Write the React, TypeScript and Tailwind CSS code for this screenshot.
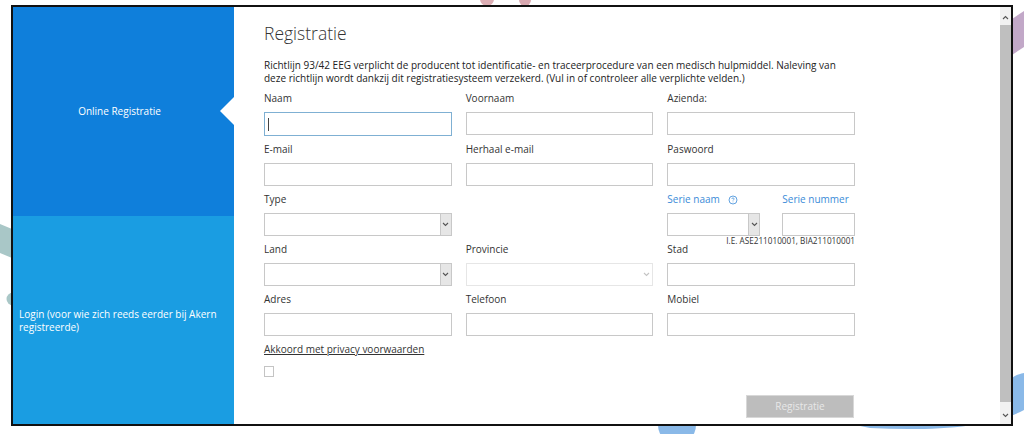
import React from "react";

const labelCls = "h-[13px] text-[10px] leading-[13px] text-[#333333] mb-[7px] whitespace-nowrap";
const inputCls = "block w-full h-[23px] border border-[#c8c8c8] bg-white";

function Chevron({ color = "#555555" }: { color?: string }) {
  return (
    <svg width="7" height="5" viewBox="0 0 7 5" fill="none">
      <path d="M1 1l2.5 2.5L6 1" stroke={color} strokeWidth="1.1" />
    </svg>
  );
}

function Select({ disabled = false, className = "w-full" }: { disabled?: boolean; className?: string }) {
  return (
    <div className={`flex justify-end h-[23px] border ${disabled ? "border-[#e6e6e6]" : "border-[#c8c8c8]"} bg-white ${className}`}>
      <div className={`w-[11px] flex items-center justify-center ${disabled ? "" : "bg-[#e6e6e6] border-l border-[#c8c8c8]"}`}>
        <Chevron color={disabled ? "#c4c4c4" : "#555555"} />
      </div>
    </div>
  );
}

function Field({ label, children }: { label: string; children?: React.ReactNode }) {
  return (
    <div className="min-w-0">
      <div className={labelCls}>{label}</div>
      {children ?? <div className={inputCls} />}
    </div>
  );
}

export default function App() {
  return (
    <div className="relative w-[1024px] h-[434px] overflow-hidden bg-white pt-[5px] pl-[11px]" style={{ fontFamily: '"Open Sans", "Noto Sans", sans-serif' }}>
      <svg className="absolute left-0 top-0" width="1024" height="434" viewBox="0 0 1024 434">
        <circle cx="487" cy="-1" r="7" fill="#dcaeb4" />
        <circle cx="525" cy="0" r="6" fill="#d8a8b0" />
        <path d="M1024 11L1012 19V55L1024 47Z" fill="#c2a8c8" />
        <path d="M0 224L12 229V258L0 253Z" fill="#a9c7c7" />
        <circle cx="13" cy="299" r="6.5" fill="#a9c7c7" />
        <circle cx="677" cy="425" r="19" fill="#8ab9e8" />
        <path d="M1024 373C1014 375 1012 378 1012 380V424H850L870 428C930 431 990 428 1024 410Z" fill="#8ab9e8" />
      </svg>

      <div className="relative flex w-[1002px] h-[421px] border-2 border-[#111111] bg-white">
        <aside className="flex flex-col w-[221px] text-[10px] leading-[13px] text-white">
          <div className="relative flex items-center justify-center h-[209px] bg-[#0f7fdb] pr-[8px]">
            <span>Online Registratie</span>
            <div className="absolute right-0 top-[90px] w-0 h-0 border-y-[14px] border-y-transparent border-r-[14px] border-r-white" />
          </div>
          <div className="flex-1 bg-[#1a9de2] pl-[6px] pr-[10px] pt-[92px]">
            Login (voor wie zich reeds eerder bij Akern registreerde)
          </div>
        </aside>

        <main className="flex-1 min-w-0 pl-[30px] pt-[14px] relative">
          <h1 className="text-[17.5px] leading-[24px] font-light text-[#333333]">Registratie</h1>
          <p className="mt-[14px] w-[590px] text-[10px] leading-[13px] text-[#222222]">
            Richtlijn 93/42 EEG verplicht de producent tot identificatie- en traceerprocedure van een medisch hulpmiddel. Naleving van deze richtlijn wordt dankzij dit registratiesysteem verzekerd. (Vul in of controleer alle verplichte velden.)
          </p>

          <div className="mt-[7px] w-[591px] grid grid-cols-3 gap-x-[14px] gap-y-[7px]">
            <Field label="Naam">
              <div className="flex items-center h-[24px] border border-[#7fb0d3] bg-white pl-[3px]">
                <div className="w-px h-[13px] bg-[#444444]" />
              </div>
            </Field>
            <Field label="Voornaam" />
            <Field label="Azienda:" />
            <Field label="E-mail" />
            <Field label="Herhaal e-mail" />
            <Field label="Paswoord" />
            <Field label="Type">
              <Select />
            </Field>
            <div />
            <div className="relative">
              <div className="flex mb-[7px] h-[13px] text-[10px] leading-[13px] text-[#3b8bd8]">
                <div className="w-[115px] flex items-center whitespace-nowrap">
                  Serie naam
                  <svg className="ml-[8px]" width="10" height="10" viewBox="0 0 10 10" fill="none">
                    <circle cx="5" cy="5" r="4" stroke="#3b8bd8" strokeWidth="0.8" />
                    <path d="M3.8 4c0-1.5 2.4-1.5 2.4 0 0 .8-1.2.8-1.2 1.6M5 6.6v.7" stroke="#3b8bd8" strokeWidth="0.7" />
                  </svg>
                </div>
                <div className="whitespace-nowrap">Serie nummer</div>
              </div>
              <div className="flex justify-between">
                <Select className="w-[93px]" />
                <div className="w-[73px] h-[23px] border border-[#c8c8c8] bg-white" />
              </div>
              <div className="absolute right-0 top-[43px] text-[8.2px] leading-[10px] text-[#333333] whitespace-nowrap">I.E. ASE211010001, BIA211010001</div>
            </div>
            <Field label="Land">
              <Select />
            </Field>
            <Field label="Provincie">
              <Select disabled />
            </Field>
            <Field label="Stad" />
            <Field label="Adres" />
            <Field label="Telefoon" />
            <Field label="Mobiel" />
          </div>

          <div className="mt-[7px] text-[10px] leading-[13px] text-[#333333] underline">Akkoord met privacy voorwaarden</div>
          <div className="mt-[10px] w-[10px] h-[11px] border border-[#c4c4c4] bg-white" />

          <div className="mt-[18px] w-[590px] flex justify-end">
            <button className="w-[108px] h-[23px] border border-[#d8d8d8] bg-[#bdbdbd] text-[10px] leading-[13px] text-[#e8e8e8]">Registratie</button>
          </div>

          <div className="absolute right-0 top-0 bottom-0 w-[11px] flex flex-col bg-[#f1f1f1]">
            <div className="h-[18px] flex items-center justify-center pt-[2px]">
              <svg width="7" height="5" viewBox="0 0 7 5" fill="none"><path d="M1 4l2.5-2.5L6 4" stroke="#555555" strokeWidth="1.1" /></svg>
            </div>
            <div className="flex-1 bg-[#bfbfbf]" />
            <div className="h-[22px] flex items-center justify-center pt-[4px]">
              <Chevron />
            </div>
          </div>
        </main>
      </div>
    </div>
  );
}
